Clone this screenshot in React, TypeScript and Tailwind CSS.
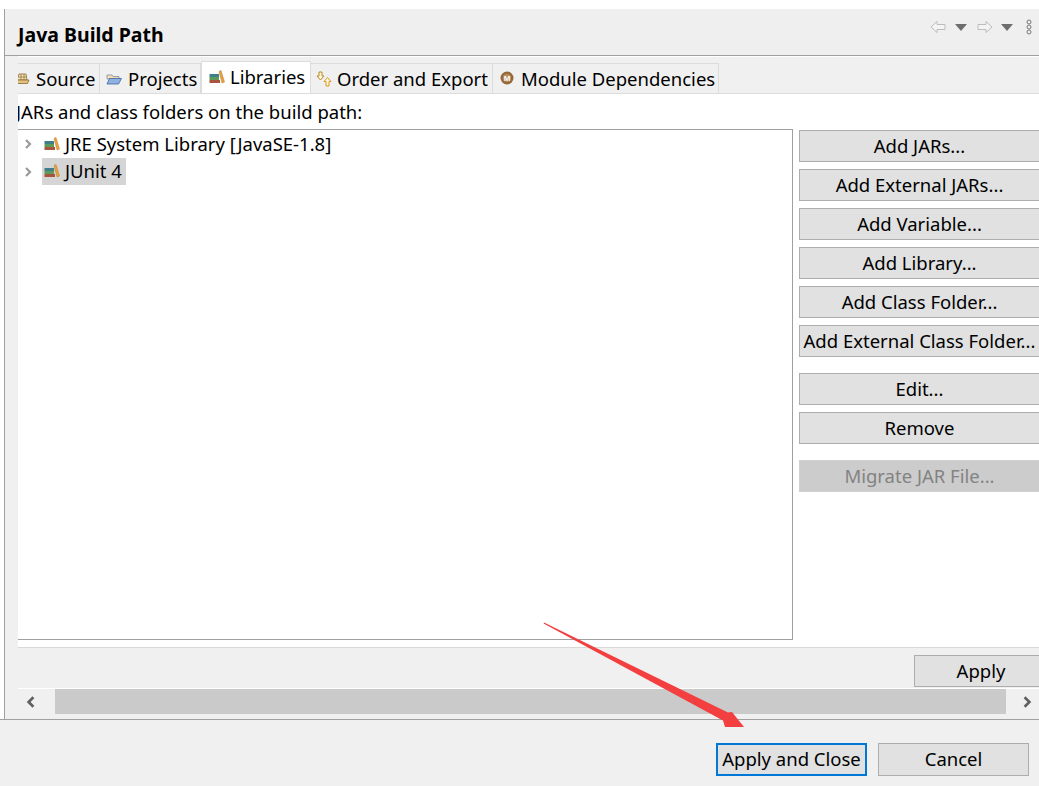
const FONT = "font-['Noto_Sans',sans-serif]";

function BooksIcon() {
  return (
    <svg width="16" height="14" viewBox="0 0 16 14" className="shrink-0">
      <rect x="0.5" y="4" width="9.5" height="3" fill="#3f7f8c" />
      <rect x="0.5" y="7" width="9.5" height="3" fill="#5f9a5a" />
      <rect x="0.5" y="10" width="10.5" height="3" fill="#a8553f" />
      <path d="M10 1.5 L12 0.5 L15.5 12 L13 13 Z" fill="#e8a33d" stroke="#b9782a" strokeWidth="0.5" />
    </svg>
  );
}

function SourceIcon() {
  return (
    <svg width="16" height="16" viewBox="0 0 16 16" className="shrink-0">
      <path d="M5 3 H12 L13 9 H3 Z" fill="#f3e3b5" stroke="#8a6a33" strokeWidth="0.8" />
      <path d="M1.5 9 H15 L13.5 12.5 H1.5 Z" fill="#e3c27c" stroke="#8a6a33" strokeWidth="0.8" />
      <path d="M7 3 V9 M10 3 V9 M4 6 H12.5" stroke="#8a6a33" strokeWidth="0.7" />
    </svg>
  );
}

function FolderIcon() {
  return (
    <svg width="16" height="16" viewBox="0 0 16 16" className="shrink-0">
      <path d="M1 4 H6 L7 5.5 H13 V8 H1 Z" fill="#f2e0ad" stroke="#7d8aa8" strokeWidth="0.8" />
      <path d="M1 13 L3.5 7.5 H15.5 L12.5 13 Z" fill="#8fb2e0" stroke="#3f62a8" strokeWidth="0.8" />
    </svg>
  );
}

function OrderIcon() {
  return (
    <svg width="16" height="16" viewBox="0 0 16 16" className="shrink-0">
      <path d="M3 1 H6 V5 H8 L4.5 9 L1 5 H3 Z" fill="#fff6dc" stroke="#b98a28" strokeWidth="1" />
      <path d="M10 15 H13 V10.5 H15 L11.5 6.5 L8 10.5 H10 Z" fill="#fff6dc" stroke="#d99a1e" strokeWidth="1" />
    </svg>
  );
}

function ModuleIcon() {
  return (
    <svg width="14" height="14" viewBox="0 0 14 14" className="shrink-0 -mt-[2px]">
      <circle cx="7" cy="7" r="6.5" fill="#96693a" />
      <circle cx="7" cy="7" r="4" fill="#b98d5f" />
      <text x="7" y="10" textAnchor="middle" fontSize="8" fontWeight="700" fill="#ffffff" fontFamily="Liberation Sans, sans-serif">M</text>
    </svg>
  );
}

function Chevron({ right = true, color = '#9a9a9a', size = 10 }: { right?: boolean; color?: string; size?: number }) {
  return (
    <svg width={size} height={size} viewBox="0 0 10 10" className="shrink-0">
      <path d={right ? 'M3 1 L7 5 L3 9' : 'M7 1 L3 5 L7 9'} fill="none" stroke={color} strokeWidth="2.2" />
    </svg>
  );
}

function Tab({ icon, label, active, className }: { icon: React.ReactNode; label: string; active?: boolean; className: string }) {
  return (
    <div
      className={
        active
          ? `flex items-center h-[32px] bg-white border-t border-x border-[#dcdcdc] pb-[2px] whitespace-nowrap ${className}`
          : `flex items-center h-[30px] bg-[#f0f0f0] border-t border-r border-[#dcdcdc] whitespace-nowrap ${className}`
      }
    >
      {icon}
      <span>{label}</span>
    </div>
  );
}

function SideButton({ label, disabled, className = '' }: { label: string; disabled?: boolean; className?: string }) {
  return (
    <button
      className={
        disabled
          ? `block w-[241px] h-[32px] bg-[#cccccc] border border-[#d0d0d0] text-[#838383] text-center whitespace-nowrap ${className}`
          : `block w-[241px] h-[32px] bg-[#e1e1e1] border border-[#adadad] text-center whitespace-nowrap ${className}`
      }
    >
      {label}
    </button>
  );
}

export default function App() {
  return (
    <div className={`relative w-[1039px] h-[786px] overflow-hidden bg-white text-[18.5px] leading-[24px] text-[#000000] ${FONT}`}>
      <div className="pt-[9px] pl-[4px] h-[719px]">
        <div className="h-full border-l border-[#a0a0a0] bg-[#f0f0f0] flex flex-col">
          {/* Title bar */}
          <div className="h-[47px] shrink-0 border-b border-[#a0a0a0] bg-[#efefef] flex items-start justify-between pl-[13px]">
            <span className="mt-[14px] font-bold text-[19.5px]">Java Build Path</span>
            <div className="flex items-center mt-[10px] pr-[7px]">
              <svg width="16" height="14" viewBox="0 0 16 14">
                <path d="M1 7 L7 1.5 V4.5 H15 V9.5 H7 V12.5 Z" fill="#f4f4f4" stroke="#bcbcbc" strokeWidth="1" />
              </svg>
              <svg width="12" height="7" viewBox="0 0 12 7" className="ml-[9px]"><path d="M0 0 H12 L6 7 Z" fill="#6d6d6d" /></svg>
              <svg width="16" height="14" viewBox="0 0 16 14" className="ml-[10px]">
                <path d="M15 7 L9 1.5 V4.5 H1 V9.5 H9 V12.5 Z" fill="#f4f4f4" stroke="#bcbcbc" strokeWidth="1" />
              </svg>
              <svg width="12" height="7" viewBox="0 0 12 7" className="ml-[8px]"><path d="M0 0 H12 L6 7 Z" fill="#6d6d6d" /></svg>
              <svg width="6" height="16" viewBox="0 0 6 16" className="ml-[13px]">
                <circle cx="3" cy="3" r="2" fill="none" stroke="#777777" />
                <circle cx="3" cy="8" r="2" fill="none" stroke="#777777" />
                <circle cx="3" cy="13" r="2" fill="none" stroke="#777777" />
              </svg>
            </div>
          </div>

          {/* Scrolled page area */}
          <div className="flex-1 min-h-0 ml-[13px] flex flex-col overflow-hidden">
            <div className="h-[38px] shrink-0 flex items-end border-t border-white bg-[#f0f0f0]">
              <div className="flex items-end w-full border-b border-[#dcdcdc] h-[37px]">
                <Tab className="w-[82px] gap-[6px]" icon={<span className="block w-[12px] overflow-hidden"><span className="block -ml-[4px]"><SourceIcon /></span></span>} label="Source" />
                <Tab className="w-[101px] pl-[6px] gap-[6px]" icon={<FolderIcon />} label="Projects" />
                <Tab active className="w-[110px] pl-[7px] gap-[5px]" icon={<BooksIcon />} label="Libraries" />
                <Tab className="w-[182px] pl-[5px] gap-[5px]" icon={<OrderIcon />} label="Order and Export" />
                <Tab className="w-[226px] pl-[7px] gap-[7px]" icon={<ModuleIcon />} label="Module Dependencies" />
              </div>
            </div>

            {/* Libraries page */}
            <div className="h-[553px] shrink-0 bg-white overflow-hidden">
              <div className="h-[35px] pt-[6px] -ml-[2px] whitespace-nowrap">JARs and class folders on the build path:</div>
              <div className="flex">
                <div className="w-[775px] h-[511px] shrink-0 border-y border-r border-[#a0a0a0] pt-[1px]">
                  <div className="flex items-center h-[27px] pl-[5px] pb-[1px]">
                    <Chevron />
                    <span className="ml-[11px]"><BooksIcon /></span>
                    <span className="ml-[5px]">JRE System Library [JavaSE-1.8]</span>
                  </div>
                  <div className="flex items-center h-[27px] pl-[5px]">
                    <Chevron />
                    <div className="ml-[9px] flex items-center h-full w-[84px] bg-[#d5d5d5] pl-[2px] pb-[1px]">
                      <BooksIcon />
                      <span className="ml-[5px]">JUnit 4</span>
                    </div>
                  </div>
                </div>
                <div className="ml-[6px] pt-[1px] flex flex-col gap-[7px]">
                  <SideButton label="Add JARs..." />
                  <SideButton label="Add External JARs..." />
                  <SideButton label="Add Variable..." />
                  <SideButton label="Add Library..." />
                  <SideButton label="Add Class Folder..." />
                  <SideButton label="Add External Class Folder..." />
                  <SideButton label="Edit..." className="mt-[9px]" />
                  <SideButton label="Remove" />
                  <SideButton label="Migrate JAR File..." disabled className="mt-[9px]" />
                </div>
              </div>
            </div>

            {/* Apply row */}
            <div className="h-[41px] shrink-0 border-t border-[#d8d8d8] flex justify-end pt-[7px]">
              <button className="w-[134px] h-[32px] shrink-0 -mr-[9px] bg-[#e1e1e1] border border-[#adadad]">Apply</button>
            </div>

            {/* Horizontal scrollbar */}
            <div className="h-[26px] shrink-0 border-t border-white flex items-stretch">
              <div className="w-[37px] flex items-center pl-[7px]"><Chevron right={false} color="#606060" size={12} /></div>
              <div className="flex-1 bg-[#cacaca]" />
              <div className="w-[33px] flex items-center justify-end pr-[6px]"><Chevron color="#606060" size={12} /></div>
            </div>
          </div>
        </div>
      </div>

      {/* Dialog buttons */}
      <div className="h-[67px] border-t border-[#a0a0a0] bg-[#f0f0f0] flex justify-end gap-[11px] pt-[23px] pr-[10px]">
        <button className="w-[151px] h-[33px] pb-[1px] bg-[#e1e1e1] border-2 border-[#0078d7] whitespace-nowrap">Apply and Close</button>
        <button className="w-[151px] h-[33px] pb-[1px] bg-[#e1e1e1] border border-[#adadad]">Cancel</button>
      </div>

      {/* Red annotation arrow */}
      <svg width="1039" height="786" viewBox="0 0 1039 786" className="absolute left-0 top-0 pointer-events-none">
        <path d="M544 622.6 L728 712.5 L732 712 L744 727 L725 727 L723 720.5 L543.6 623.4 Z" fill="#f33f3f" />
      </svg>
    </div>
  );
}
